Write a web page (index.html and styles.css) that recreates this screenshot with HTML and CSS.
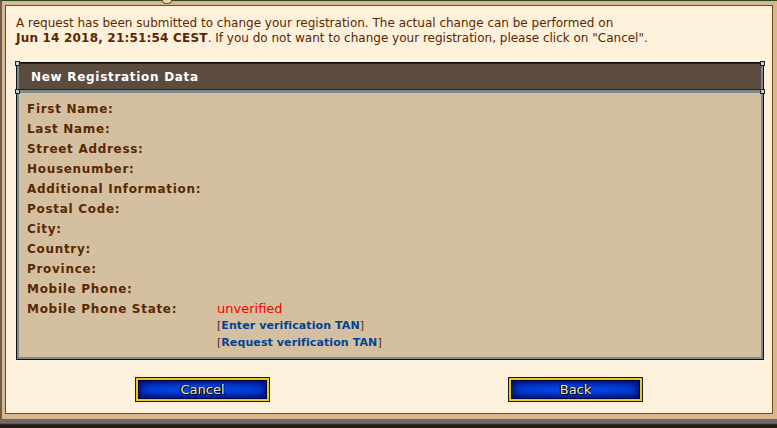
FILE: index.html
```html
<!DOCTYPE html>
<html lang="en">
<head>
  <meta charset="UTF-8" />
  <title>Change Registration</title>
  <link rel="stylesheet" href="styles.css">
</head>
<body>

  <div class="frame">
    <span class="ornament"></span>
    <div class="content">
      <p class="notice">
        A request has been submitted to change your registration. The actual change can be performed on<br/>
        <b>Jun 14 2018, 21:51:54 CEST</b>. If you do not want to change your registration, please click on "Cancel".
      </p>

      <div class="box">
        <span class="rivet rivet-tl"></span>
        <span class="rivet rivet-tr"></span>
        <span class="rivet rivet-ml"></span>
        <span class="rivet rivet-mr"></span>
        <div class="box-head">New Registration Data</div>
        <div class="box-body">
          <div class="row"><span class="label">First Name:</span><span class="value"></span></div>
          <div class="row"><span class="label">Last Name:</span><span class="value"></span></div>
          <div class="row"><span class="label">Street Address:</span><span class="value"></span></div>
          <div class="row"><span class="label">Housenumber:</span><span class="value"></span></div>
          <div class="row"><span class="label">Additional Information:</span><span class="value"></span></div>
          <div class="row"><span class="label">Postal Code:</span><span class="value"></span></div>
          <div class="row"><span class="label">City:</span><span class="value"></span></div>
          <div class="row"><span class="label">Country:</span><span class="value"></span></div>
          <div class="row"><span class="label">Province:</span><span class="value"></span></div>
          <div class="row"><span class="label">Mobile Phone:</span><span class="value"></span></div>
          <div class="row row-multi">
            <span class="label">Mobile Phone State:</span>
            <span class="value">
              <span class="red">unverified</span>
              <span class="link-line">[<a href="#">Enter verification TAN</a>]</span>
              <span class="link-line">[<a href="#">Request verification TAN</a>]</span>
            </span>
          </div>
        </div>
      </div>

      <div class="buttons">
        <div class="button-cell"><button class="blue-btn">Cancel</button></div>
        <div class="button-cell"><button class="blue-btn">Back</button></div>
      </div>
    </div>
  </div>
  <div class="bottom-strip"></div>

</body>
</html>
```

FILE: styles.css
```css
* {
  box-sizing: border-box;
}

body {
  margin: 0;
  width: 777px;
  height: 428px;
  overflow: hidden;
  background: #2a1812;
  font-family: "DejaVu Sans", Verdana, sans-serif;
  font-size: 12px;
  color: #5a2800;
}

.frame {
  position: relative;
  height: 419px;
  background: #d8b690;
  border-top: 1px solid #2f4a22;
  border-left: 2px solid #6b5d52;
  padding: 4px 4px 5px 3px;
}

.ornament {
  position: absolute;
  left: 160px;
  top: -1px;
  width: 10px;
  height: 4px;
  border: 1px solid #6b5a3a;
  border-top: none;
  border-radius: 0 0 5px 5px;
  background: #e8d8b0;
}

.content {
  height: 409px;
  background: #fef1dc;
  border: 1px solid #7b4a12;
  padding: 10px 8px 0 10px;
}

.notice {
  margin: 0 0 16px 0;
  line-height: 15px;
}

.notice b {
  letter-spacing: 0.2px;
}

.box {
  position: relative;
  border: 1px solid #111;
  box-shadow: inset 0 0 0 2px #7b8a8e;
  padding: 2px;
}

.box-head {
  background: #5c4c40;
  color: #fff;
  font-weight: bold;
  font-size: 12px;
  letter-spacing: 0.7px;
  height: 30px;
  line-height: 24px;
  padding-left: 12px;
  border-top: 1px solid #222;
  border-bottom: 3px solid #7b8a8e;
  box-shadow: inset 0 -1px 0 #222;
  margin: -2px -2px 0 -2px;
  padding-top: 1px;
  border-left: 2px solid #7b8a8e;
  border-right: 2px solid #7b8a8e;
}

.box-body {
  background: #d4c0a1;
  padding: 6px 8px 6px 8px;
}

.row {
  display: flex;
  line-height: 20px;
}

.label {
  width: 190px;
  font-weight: bold;
  letter-spacing: 0.7px;
}

.row-multi {
  line-height: 16px;
  padding-top: 2px;
}

.value {
  display: flex;
  flex-direction: column;
  font-size: 11px;
}

.red {
  color: #f00000;
  font-size: 13px;
}

.link-line {
  padding-top: 1px;
}

.link-line a {
  color: #004294;
  font-weight: bold;
  letter-spacing: 0.1px;
  text-decoration: none;
}

.rivet {
  position: absolute;
  width: 5px;
  height: 5px;
  background: #c8d0d0;
  border: 1px solid #222;
}

.rivet-tl { left: -2px; top: -2px; }
.rivet-tr { right: -2px; top: -2px; }
.rivet-ml { left: -2px; top: 26px; }
.rivet-mr { right: -2px; top: 26px; }

.buttons {
  display: flex;
  width: 746px;
  margin-top: 18px;
}

.button-cell {
  flex: 1;
  display: flex;
  justify-content: center;
}

.blue-btn {
  width: 133px;
  height: 23px;
  padding: 0;
  border: 2px solid #f0c818;
  outline: 1px solid #1a1a1a;
  box-shadow: inset 0 0 0 1px #000050, inset 0 0 6px 3px #00106a;
  background: radial-gradient(ellipse at center, #0a4ef0 0%, #003ed8 55%, #0022a0 100%);
  color: #f4e4b8;
  font-family: "DejaVu Sans", Verdana, sans-serif;
  font-size: 13px;
  line-height: 17px;
  text-shadow: 1px 1px 0 #000, -1px 0 0 #000020;
  cursor: pointer;
}

.bottom-strip {
  height: 9px;
  background: linear-gradient(#3a3a3a 0, #8a8a8a 1px, #5a5a5a 2px, #7a7a7a 4px, #3a3a3a 5px, #2a1812 6px);
}
```
